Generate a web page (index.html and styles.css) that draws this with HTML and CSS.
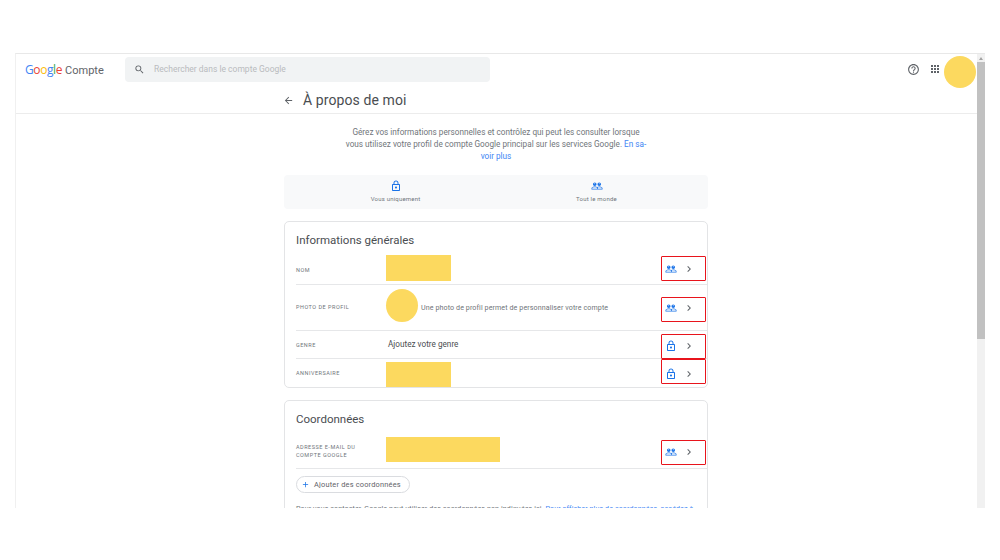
FILE: index.html
```html
<!DOCTYPE html>
<html lang="fr">
<head>
    <meta charset="UTF-8">
    <title>À propos de moi</title>
    <link rel="stylesheet" href="styles.css">
</head>
<body>
    <svg class="defs" width="0" height="0">
        <symbol id="people" viewBox="0 0 24 24"><path d="M16.5 13c-1.2 0-3.07.34-4.5 1-1.43-.67-3.3-1-4.5-1C5.33 13 1 14.08 1 16.25V19h22v-2.75c0-2.17-4.33-3.25-6.5-3.25zm-4 4.5h-10v-1.25c0-.54 2.56-1.75 5-1.75s5 1.21 5 1.75v1.25zm9 0H14v-1.25c0-.46-.2-.86-.52-1.22.88-.3 1.96-.53 3.02-.53 2.44 0 5 1.21 5 1.75v1.25zM7.5 12c1.93 0 3.5-1.57 3.5-3.5S9.43 5 7.5 5 4 6.57 4 8.5 5.57 12 7.5 12zm0-5.5c.55 0 1 .45 1 1s-.45 1-1 1-1-.45-1-1 .45-1 1-1zm9 5.5c1.93 0 3.5-1.57 3.5-3.5S18.43 5 16.5 5 13 6.57 13 8.5s1.57 3.5 3.5 3.5zm0-5.5c.55 0 1 .45 1 1s-.45 1-1 1-1-.45-1-1 .45-1 1-1z"/></symbol>
        <symbol id="lock" viewBox="0 0 24 24"><path d="M18 8h-1V6c0-2.76-2.24-5-5-5S7 3.24 7 6v2H6c-1.1 0-2 .9-2 2v10c0 1.1.9 2 2 2h12c1.1 0 2-.9 2-2V10c0-1.1-.9-2-2-2zM8.9 6c0-1.71 1.39-3.1 3.1-3.1s3.1 1.39 3.1 3.1v2H8.9V6zM18 20H6V10h12v10zm-6-3c1.1 0 2-.9 2-2s-.9-2-2-2-2 .9-2 2 .9 2 2 2z"/></symbol>
        <symbol id="chevron" viewBox="0 0 24 24"><path d="M10 6L8.59 7.41 13.17 12l-4.58 4.59L10 18l6-6z"/></symbol>
    </svg>

    <div class="frame">
        <div class="page">
            <header class="topbar">
                <div class="logo">
                    <span class="google"><span class="blue">G</span><span class="red">o</span><span class="yellow">o</span><span class="blue">g</span><span class="green">l</span><span class="red">e</span></span>
                    <span class="product">Compte</span>
                </div>
                <div class="search">
                    <svg class="search-icon" viewBox="0 0 24 24"><path d="M15.5 14h-.79l-.28-.27A6.47 6.47 0 0 0 16 9.5 6.5 6.5 0 1 0 9.5 16c1.61 0 3.09-.59 4.23-1.57l.27.28v.79l5 4.99L20.49 19l-4.99-5zm-6 0C7.01 14 5 11.99 5 9.5S7.01 5 9.5 5 14 7.01 14 9.5 11.99 14 9.5 14z"/></svg>
                    <span>Rechercher dans le compte Google</span>
                </div>
                <div class="actions">
                    <svg class="help-icon" viewBox="0 0 24 24"><path d="M11 18h2v-2h-2v2zm1-16C6.48 2 2 6.48 2 12s4.48 10 10 10 10-4.48 10-10S17.52 2 12 2zm0 18c-4.41 0-8-3.59-8-8s3.59-8 8-8 8 3.59 8 8-3.59 8-8 8zm0-14c-2.21 0-4 1.79-4 4h2c0-1.1.9-2 2-2s2 .9 2 2c0 2-3 1.75-3 5h2c0-2.25 3-2.5 3-5 0-2.21-1.79-4-4-4z"/></svg>
                    <svg class="apps-icon" viewBox="0 0 24 24"><path d="M4 8h4V4H4v4zm6 12h4v-4h-4v4zm-6 0h4v-4H4v4zm0-6h4v-4H4v4zm6 0h4v-4h-4v4zm6-10v4h4V4h-4zm-6 4h4V4h-4v4zm6 6h4v-4h-4v4zm0 6h4v-4h-4v4z"/></svg>
                    <div class="avatar"></div>
                </div>
            </header>

            <div class="title-bar">
                <div class="title-inner">
                    <svg class="back-icon" viewBox="0 0 24 24"><path d="M20 11H7.83l5.59-5.59L12 4l-8 8 8 8 1.41-1.41L7.83 13H20v-2z"/></svg>
                    <h1>À propos de moi</h1>
                </div>
            </div>

            <main class="content">
                <p class="intro">Gérez vos informations personnelles et contrôlez qui peut les consulter lorsque<br>vous utilisez votre profil de compte Google principal sur les services Google. <a href="#">En sa-<br>voir plus</a></p>

                <div class="legend">
                    <div class="legend-item">
                        <svg class="icon-blue"><use href="#lock"/></svg>
                        <span>Vous uniquement</span>
                    </div>
                    <div class="legend-item">
                        <svg class="icon-blue"><use href="#people"/></svg>
                        <span>Tout le monde</span>
                    </div>
                </div>

                <section class="card">
                    <h2>Informations générales</h2>

                    <div class="row row-name">
                        <div class="label">Nom</div>
                        <div class="value"><div class="mask"></div></div>
                        <div class="access">
                            <svg class="icon-blue"><use href="#people"/></svg>
                            <svg class="chevron"><use href="#chevron"/></svg>
                        </div>
                    </div>
                    <div class="row row-photo">
                        <div class="label">Photo de profil</div>
                        <div class="value photo-value">
                            <div class="photo"></div>
                            <span class="hint">Une photo de profil permet de personnaliser votre compte</span>
                        </div>
                        <div class="access">
                            <svg class="icon-blue"><use href="#people"/></svg>
                            <svg class="chevron"><use href="#chevron"/></svg>
                        </div>
                    </div>
                    <div class="row row-gender">
                        <div class="label">Genre</div>
                        <div class="value gender">Ajoutez votre genre</div>
                        <div class="access">
                            <svg class="icon-blue"><use href="#lock"/></svg>
                            <svg class="chevron"><use href="#chevron"/></svg>
                        </div>
                    </div>
                    <div class="row row-birthday">
                        <div class="label">Anniversaire</div>
                        <div class="value"><div class="mask"></div></div>
                        <div class="access">
                            <svg class="icon-blue"><use href="#lock"/></svg>
                            <svg class="chevron"><use href="#chevron"/></svg>
                        </div>
                    </div>
                </section>

                <section class="card contact-card">
                    <h2>Coordonnées</h2>

                    <div class="row row-email">
                        <div class="label">Adresse e-mail du<br>compte Google</div>
                        <div class="value"><div class="mask mask-wide"></div></div>
                        <div class="access">
                            <svg class="icon-blue"><use href="#people"/></svg>
                            <svg class="chevron"><use href="#chevron"/></svg>
                        </div>
                    </div>

                    <button class="add-btn" type="button">
                        <svg class="plus-icon" viewBox="0 0 24 24"><path d="M19 13h-6v6h-2v-6H5v-2h6V5h2v6h6v2z"/></svg>
                        Ajouter des coordonnées
                    </button>

                    <p class="note">Pour vous contacter, Google peut utiliser des coordonnées non indiquées ici. <a href="#">Pour afficher plus de coordonnées, accédez à</a></p>
                </section>
            </main>
        </div>

        <div class="scrollbar">
            <div class="scroll-arrow"></div>
            <div class="scroll-thumb"></div>
        </div>
    </div>
</body>
</html>
```

FILE: styles.css
```css
html, body {
    height: 100%;
    overflow: hidden;
}

body {
    margin: 0;
    background: #fff;
    font-family: Roboto, "Liberation Sans", sans-serif;
    color: #70757a;
}

.defs {
    display: block;
    height: 0;
}

a {
    color: #4285f4;
    text-decoration: none;
}

.frame {
    display: flex;
    width: 970px;
    height: 455px;
    margin: 53px 0 0 15px;
    border-top: 1px solid #e8e8e8;
    border-left: 1px solid #f0f0f0;
    box-sizing: border-box;
    overflow: hidden;
}

.page {
    flex: 1;
    min-width: 0;
}

/* top bar */
.topbar {
    display: flex;
    align-items: flex-start;
    height: 34px;
}

.logo {
    display: flex;
    align-items: baseline;
    width: 109px;
    padding: 8px 0 0 9px;
    box-sizing: border-box;
    font-size: 12px;
    line-height: 16px;
}

.google {
    font-family: "Open Sans", sans-serif;
    font-size: 12px;
    letter-spacing: -0.4px;
    margin-right: 3px;
}

.product {
    font-size: 11px;
    color: #5f6368;
}

.blue { color: #4285f4; }
.red { color: #ea4335; }
.yellow { color: #fbbc05; }
.green { color: #34a853; }

.search {
    display: flex;
    align-items: center;
    gap: 9px;
    width: 365px;
    height: 25px;
    margin-top: 3px;
    padding: 0 0 1px 9px;
    box-sizing: border-box;
    background: #f1f3f4;
    border-radius: 4px;
    font-size: 8.5px;
    color: #b9bbbe;
}

.search-icon {
    width: 11px;
    height: 11px;
    fill: #5f6368;
}

.actions {
    display: flex;
    align-items: flex-start;
    margin-left: auto;
    padding-right: 1px;
    margin-top: 2px;
}

.help-icon {
    width: 13px;
    height: 13px;
    margin: 7px 0 0;
    fill: #5f6368;
}

.apps-icon {
    width: 12px;
    height: 12px;
    margin: 7px 3px 0 9px;
    fill: #5f6368;
}

.avatar {
    width: 32px;
    height: 32px;
    border-radius: 50%;
    background: #fcd95f;
}

/* title */
.title-bar {
    height: 26px;
    border-bottom: 1px solid #ececec;
    box-sizing: border-box;
}

.title-inner {
    display: flex;
    align-items: center;
    gap: 9px;
    width: 424px;
    margin-left: 267px;
    height: 24px;
}

.back-icon {
    width: 11px;
    height: 11px;
    fill: #5f6368;
}

h1 {
    margin: 0;
    font-size: 14px;
    font-weight: 400;
    letter-spacing: 0.1px;
    color: #4a4d51;
}

/* content */
.content {
    width: 424px;
    margin-left: 268px;
}

.intro {
    margin: 12px 0 0;
    font-size: 8.2px;
    line-height: 12px;
    text-align: center;
}

.legend {
    display: grid;
    grid-template-columns: 1fr 1fr;
    height: 34px;
    margin-top: 13px;
    padding: 0 11px;
    background: #f8f9fa;
    border-radius: 4px;
}

.legend-item {
    display: flex;
    flex-direction: column;
    align-items: center;
    padding-top: 5px;
    font-size: 6px;
    letter-spacing: 0.2px;
}

.legend-item span {
    margin-top: 3px;
}

svg.icon-blue {
    width: 12px;
    height: 12px;
    fill: #1a73e8;
}

.card {
    margin-top: 12px;
    padding-left: 11px;
    background: #fff;
    border: 1px solid #e3e4e6;
    border-radius: 5px;
    box-sizing: border-box;
}

h2 {
    margin: 0;
    height: 32px;
    font-size: 11.5px;
    font-weight: 400;
    line-height: 36px;
    color: #4a4d51;
}

.row {
    display: flex;
    align-items: center;
    border-bottom: 1px solid #e6e7e9;
}

.label {
    width: 90px;
    flex-shrink: 0;
    font-size: 5.5px;
    line-height: 8px;
    letter-spacing: 0.5px;
    text-transform: uppercase;
}

.value {
    flex: 1;
    min-width: 0;
}

.mask {
    width: 65px;
    height: 26px;
    background: #fcd95f;
}

.mask-wide {
    width: 114px;
    height: 25px;
}

.photo-value {
    display: flex;
    align-items: center;
    gap: 3px;
}

.photo {
    width: 32px;
    height: 33px;
    border-radius: 50%;
    background: #fcd95f;
}

.hint {
    font-size: 7.1px;
    letter-spacing: 0.1px;
    margin-top: 3px;
}

.gender {
    padding: 0 0 2px 2px;
    font-size: 8.2px;
    color: #4a4d51;
}

/* access cell, outlined in red in the screenshot */
.access {
    display: flex;
    align-items: center;
    gap: 6px;
    width: 45px;
    height: 25px;
    margin-right: 1px;
    padding-left: 3px;
    border: 1px solid #e8141c;
    border-radius: 1px;
    box-sizing: border-box;
}

svg.chevron {
    width: 12px;
    height: 12px;
    fill: #5f6368;
}

.row-name {
    padding: 1px 0 3px;
}

.row-name .label {
    padding-top: 4px;
}

.row-name .access {
    padding-top: 2px;
}

.row-photo {
    padding: 4px 0 8px;
}

.row-photo .label {
    padding-top: 2px;
}

.row-photo .access {
    align-self: flex-end;
    padding-bottom: 4px;
}

.row-gender {
    height: 28px;
    box-sizing: border-box;
}

.row-gender .access {
    align-self: flex-end;
    margin-bottom: -1px;
    padding-bottom: 2px;
}

.row-birthday {
    height: 28px;
    border-bottom: 0;
    box-sizing: border-box;
}

.row-birthday .mask {
    height: 25px;
    margin-top: 2px;
}

.row-birthday .access {
    align-self: flex-start;
    padding-top: 4px;
}

.contact-card {
    margin-top: 12px;
}

.row-email {
    padding: 4px 0 6px;
}

.row-email .label {
    padding-top: 2px;
}

.row-email .access {
    align-self: flex-end;
    margin-bottom: -3px;
    padding-bottom: 2px;
}

.add-btn {
    display: flex;
    align-items: center;
    gap: 4px;
    height: 17px;
    margin-top: 7px;
    padding: 0 8px 0 4px;
    background: #fff;
    border: 1px solid #dadce0;
    border-radius: 9px;
    font-family: inherit;
    font-size: 7.4px;
    letter-spacing: 0.2px;
    color: #5f6368;
}

.plus-icon {
    width: 9px;
    height: 9px;
    fill: #1a73e8;
}

.note {
    margin: 10px 0 0;
    font-size: 7.1px;
    letter-spacing: 0.1px;
    line-height: 12px;
}

/* scrollbar */
.scrollbar {
    width: 8px;
    flex-shrink: 0;
    background: #f1f1f1;
}

.scroll-arrow {
    width: 0;
    height: 0;
    margin: 3px auto 0;
    border: 2px solid transparent;
    border-top: 0;
    border-bottom: 3px solid #a3a3a3;
}

.scroll-thumb {
    height: 277px;
    margin-top: 2px;
    background: #c1c1c1;
}
```
